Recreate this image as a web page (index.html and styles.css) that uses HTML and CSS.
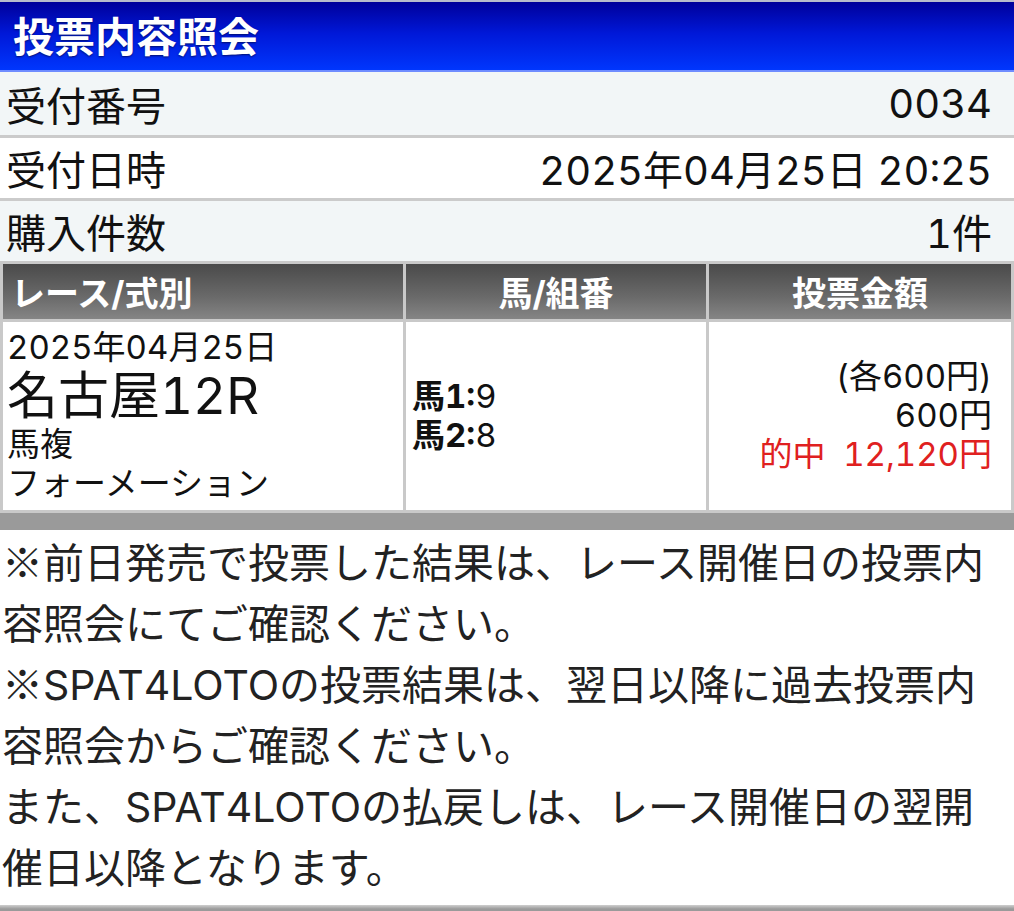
FILE: index.html
```html
<!DOCTYPE html>
<html lang="ja">
<head>
  <meta charset="UTF-8" />
  <meta name="viewport" content="width=device-width, initial-scale=1.0"/>
  <title>投票内容照会</title>
  <link rel="stylesheet" href="styles.css">
</head>
<body>

<h1 class="title">投票内容照会</h1>

<div class="info">
  <div class="info-row odd"><span>受付番号</span><span>0034</span></div>
  <div class="info-row"><span>受付日時</span><span>2025年04月25日 20:25</span></div>
  <div class="info-row odd"><span>購入件数</span><span>1件</span></div>
</div>

<table class="bets">
  <thead>
    <tr>
      <th class="col-race">レース/式別</th>
      <th class="col-horse">馬/組番</th>
      <th class="col-amount">投票金額</th>
    </tr>
  </thead>
  <tbody>
    <tr>
      <td class="col-race">
        <div class="race-date">2025年04月25日</div>
        <div class="race-name">名古屋12R</div>
        <div>馬複</div>
        <div>フォーメーション</div>
      </td>
      <td class="col-horse">
        <div><b>馬1:</b>9</div>
        <div><b>馬2:</b>8</div>
      </td>
      <td class="col-amount">
        <div>(各600円)</div>
        <div>600円</div>
        <div class="hit">的中&nbsp;&nbsp;12,120円</div>
      </td>
    </tr>
  </tbody>
</table>
<div class="bar"></div>

<div class="notes">
  <p><span class="mark">※</span>前日発売で投票した結果は、レース開催日の投票内容照会にてご確認ください。</p>
  <p><span class="mark">※</span>SPAT4LOTOの投票結果は、翌日以降に過去投票内容照会からご確認ください。</p>
  <p>また、SPAT4LOTOの払戻しは、レース開催日の翌開催日以降となります。</p>
</div>
<div class="bar bottom"></div>

</body>
</html>
```

FILE: styles.css
```css
body {
  font-family: Inter, "Noto Sans CJK JP", sans-serif;
  font-variant-numeric: tabular-nums;
  background: #fff;
  color: #111;
  margin: 0;
  padding: 0;
  width: 1014px;
}
.title {
  margin: 0;
  height: 70px;
  line-height: 70px;
  padding: 0 13px;
  font-size: 41px;
  font-weight: bold;
  color: #fff;
  text-shadow: 0 1px 2px #001070;
  border-top: 2px solid #b8bccc;
  background: linear-gradient(to bottom, #00009a, #0018d8 45%, #0038ff);
  box-shadow: inset 0 -2px 0 #6f8cff;
}
.info-row {
  display: flex;
  justify-content: space-between;
  align-items: center;
  height: 60px;
  padding: 0 22px 0 6px;
  font-size: 40px;
  background: #fff;
  border-bottom: 3px solid #cbcbcb;
}
.info-row.odd { background: #f2f6f7; }
.info-row:first-child { height: 63px; }
.info-row:last-child { border-bottom: none; }

.bets {
  width: 100%;
  border-collapse: separate;
  border-spacing: 3px;
  background: #c9c9c9;
  margin: 0;
}
.bets th, .bets td { box-sizing: border-box; }
.bets th {
  height: 55px;
  padding: 0 8px;
  font-size: 34px;
  font-weight: bold;
  color: #fff;
  background: linear-gradient(to bottom, #4a4a4a, #6a6a6a 60%, #858585);
  text-align: center;
}
.bets th.col-race { text-align: left; }
.bets td {
  background: #fff;
  padding: 6px 6px 7px 4px;
  font-size: 33px;
  line-height: 39px;
  vertical-align: middle;
}
.col-race { width: 400px; }
.col-horse { width: 300px; }
.bets td.col-horse { padding-left: 6px; }
.bets td.col-amount { text-align: right; padding-right: 19px; }
.race-name { font-size: 51px; line-height: 58px; }
.hit { color: #e02020; }

.bar { height: 17px; background: #9a9a9a; }
.bar.bottom { height: 10px; background: linear-gradient(to bottom, #cfcfcf, #9a9a9a 40%); }

.notes {
  padding: 3px 22px 6px 2px;
  font-size: 41px;
  line-height: 61px;
  color: #222;
}
.notes p { margin: 0; }
.notes .mark { font-family: "Noto Sans CJK JP", sans-serif; line-height: 1; }
```
